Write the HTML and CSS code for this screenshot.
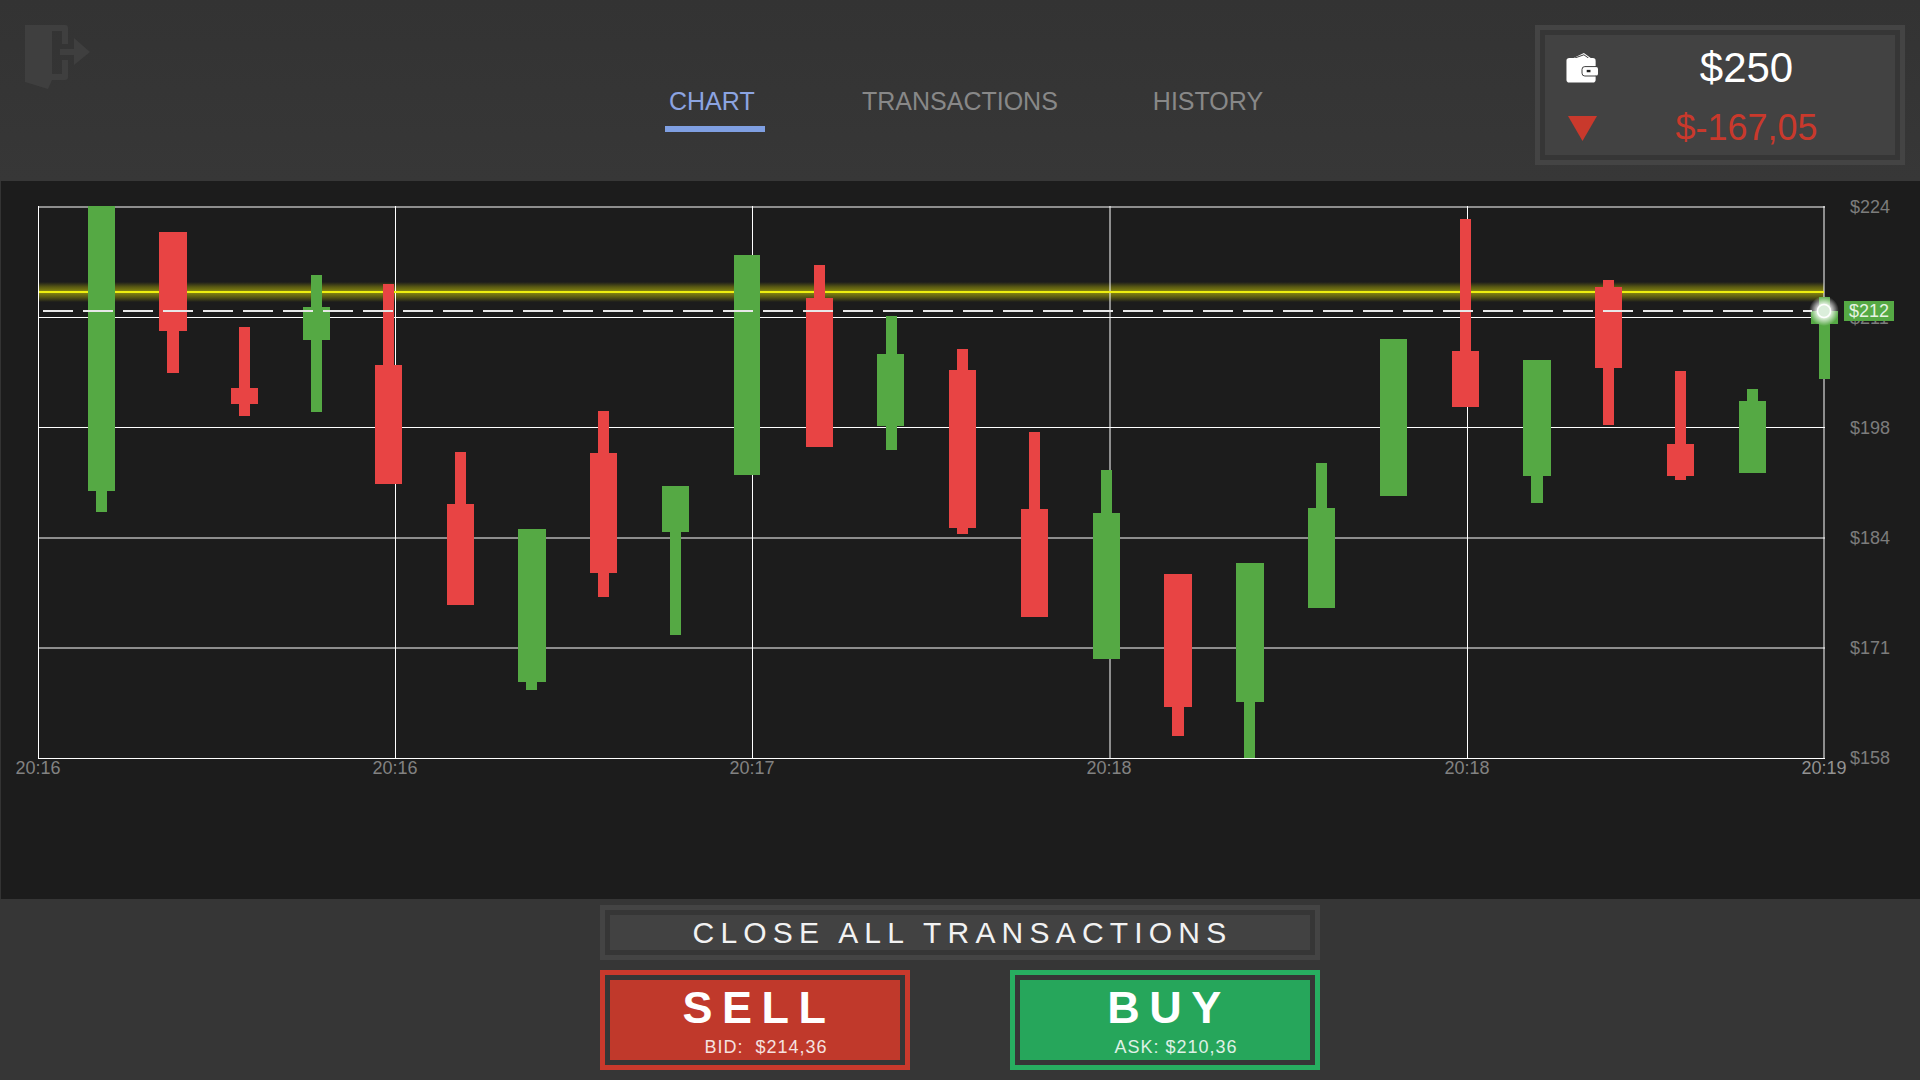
FILE: index.html
```html
<!DOCTYPE html>
<html lang="en">
<head>
    <meta charset="UTF-8">
    <meta name="viewport" content="width=device-width, initial-scale=1.0">
    <title>Trading chart</title>
    <link rel="stylesheet" href="styles.css">
</head>
<body>
    <header class="topbar">
        <svg class="logout" width="65" height="65" viewBox="25 25 65 65">
            <polygon class="logout-fill" points="25,25 52,25 52,80 48,89 25,82"/>
            <polyline class="logout-line" points="50,28 65,28 65,44"/>
            <polyline class="logout-line" points="65,60 65,77 50,77"/>
            <rect class="logout-fill" x="60" y="49" width="16" height="6"/>
            <polygon class="logout-fill" points="74,38 90,52 74,65"/>
        </svg>

        <nav class="tabs">
            <a class="tab active">CHART</a>
            <a class="tab">TRANSACTIONS</a>
            <a class="tab">HISTORY</a>
        </nav>

        <div class="frame wallet">
            <div class="frame-inner wallet-inner">
                <div class="wallet-row">
                    <div class="wallet-icon">
                        <svg width="34" height="32" viewBox="0 0 34 32">
                            <polygon fill="#fff" points="7,6 19,0 27,6"/>
                            <polyline fill="none" stroke="#333" stroke-width="1" points="9,5.500 19,2 24,5.500"/>
                            <rect fill="#fff" x="0.500" y="5.500" width="31" height="26" rx="3"/>
                            <rect fill="#fff" x="28" y="15" width="6" height="9" rx="2"/>
                            <path fill="none" stroke="#333" d="M32 14.500H20a3 3 0 0 0-3 3v4a3 3 0 0 0 3 3H32"/>
                            <rect fill="#222" x="22" y="18" width="4" height="2.500"/>
                        </svg>
                    </div>
                    <span class="balance">$250</span>
                </div>
                <div class="wallet-row wallet-row-loss">
                    <div class="wallet-icon">
                        <svg class="loss-arrow" width="29" height="25" viewBox="0 0 29 25">
                            <polygon fill="#c9392c" points="0,0 29,0 14.500,25"/>
                        </svg>
                    </div>
                    <span class="loss">$-167,05</span>
                </div>
            </div>
        </div>
    </header>

    <main class="chart">
        <svg class="plot" width="1920" height="718" viewBox="0 181 1920 718">
            <defs>
                <linearGradient id="glow" x1="0" y1="0" x2="0" y2="1">
                    <stop offset="0" stop-color="#6e6e10" stop-opacity="0"/>
                    <stop offset="0.25" stop-color="#6e6e10" stop-opacity="0.75"/>
                    <stop offset="0.5" stop-color="#8f8f10"/>
                    <stop offset="0.75" stop-color="#6e6e10" stop-opacity="0.75"/>
                    <stop offset="1" stop-color="#6e6e10" stop-opacity="0"/>
                </linearGradient>
                <radialGradient id="halo">
                    <stop offset="0.45" stop-color="#fff" stop-opacity="0.85"/>
                    <stop offset="1" stop-color="#fff" stop-opacity="0"/>
                </radialGradient>
            </defs>

            <rect x="39" y="282" width="1785" height="20" fill="url(#glow)"/>

            <!-- grid -->
            <g class="grid">
                <line x1="38" x2="1825" y1="207" y2="207"/>
                <line x1="38" x2="1825" y1="317.500" y2="317.500"/>
                <line x1="38" x2="1825" y1="427.500" y2="427.500"/>
                <line x1="38" x2="1825" y1="538" y2="538"/>
                <line x1="38" x2="1825" y1="648" y2="648"/>
                <line x1="38" x2="1825" y1="758.500" y2="758.500"/>
                <line x1="38.500" x2="38.500" y1="206" y2="759"/>
                <line x1="395.500" x2="395.500" y1="206" y2="759"/>
                <line x1="752.500" x2="752.500" y1="206" y2="759"/>
                <line x1="1110" x2="1110" y1="206" y2="759"/>
                <line x1="1467.500" x2="1467.500" y1="206" y2="759"/>
                <line x1="1824" x2="1824" y1="206" y2="759"/>
            </g>

            <rect class="target" x="39" y="291" width="1785" height="2"/>

            <!-- candles -->
            <g class="up">
                <rect x="88" y="206" width="27" height="285"/><rect x="96" y="491" width="11" height="21"/>
                <rect x="303" y="307" width="27" height="33"/><rect x="311" y="275" width="11" height="137"/>
                <rect x="518" y="529" width="28" height="153"/><rect x="526" y="682" width="11" height="8"/>
                <rect x="662" y="486" width="27" height="46"/><rect x="670" y="532" width="11" height="103"/>
                <rect x="734" y="255" width="26" height="220"/>
                <rect x="877" y="354" width="27" height="72"/><rect x="886" y="316" width="11" height="134"/>
                <rect x="1093" y="513" width="27" height="146"/><rect x="1101" y="470" width="11" height="43"/>
                <rect x="1236" y="563" width="28" height="139"/><rect x="1244" y="702" width="11" height="56"/>
                <rect x="1308" y="508" width="27" height="100"/><rect x="1316" y="463" width="11" height="45"/>
                <rect x="1380" y="339" width="27" height="157"/>
                <rect x="1523" y="360" width="28" height="116"/><rect x="1531" y="476" width="12" height="27"/>
                <rect x="1739" y="401" width="27" height="72"/><rect x="1747" y="389" width="11" height="12"/>
                <rect x="1811" y="311" width="27" height="13"/><rect x="1819" y="297" width="11" height="82"/>
            </g>
            <g class="down">
                <rect x="159" y="232" width="28" height="99"/><rect x="167" y="331" width="12" height="42"/>
                <rect x="231" y="388" width="27" height="16"/><rect x="239" y="327" width="11" height="89"/>
                <rect x="375" y="365" width="27" height="119"/><rect x="383" y="284" width="11" height="81"/>
                <rect x="447" y="504" width="27" height="101"/><rect x="455" y="452" width="11" height="52"/>
                <rect x="590" y="453" width="27" height="120"/><rect x="598" y="411" width="11" height="186"/>
                <rect x="806" y="298" width="27" height="149"/><rect x="814" y="265" width="11" height="33"/>
                <rect x="949" y="370" width="27" height="158"/><rect x="957" y="349" width="11" height="185"/>
                <rect x="1021" y="509" width="27" height="108"/><rect x="1029" y="432" width="11" height="77"/>
                <rect x="1164" y="574" width="28" height="133"/><rect x="1172" y="707" width="12" height="29"/>
                <rect x="1452" y="351" width="27" height="56"/><rect x="1460" y="219" width="11" height="132"/>
                <rect x="1595" y="287" width="27" height="81"/><rect x="1603" y="280" width="11" height="145"/>
                <rect x="1667" y="444" width="27" height="32"/><rect x="1675" y="371" width="11" height="109"/>
            </g>

            <line class="price-line" x1="43" x2="1812" y1="311" y2="311"/>

            <circle cx="1824" cy="311" r="15" fill="url(#halo)"/>
            <circle class="marker" cx="1824" cy="311" r="6.500"/>

            <!-- axis labels -->
            <g class="axis">
                <text x="1850" y="213">$224</text>
                <text x="1850" y="324">$211</text>
                <text x="1850" y="434">$198</text>
                <text x="1850" y="544">$184</text>
                <text x="1850" y="654">$171</text>
                <text x="1850" y="764">$158</text>
                <text class="time" x="38" y="774">20:16</text>
                <text class="time" x="395" y="774">20:16</text>
                <text class="time" x="752" y="774">20:17</text>
                <text class="time" x="1109" y="774">20:18</text>
                <text class="time" x="1467" y="774">20:18</text>
                <text class="time last" x="1824" y="774">20:19</text>
            </g>

            <rect class="price-tag" x="1844" y="301" width="50" height="20"/>
            <text class="price-text" x="1869" y="317">$212</text>
        </svg>
    </main>

    <footer class="actions">
        <button class="frame close-all">
            <span class="frame-inner close-label">CLOSE ALL TRANSACTIONS</span>
        </button>
        <div class="trade-row">
            <button class="trade sell">
                <span class="trade-inner">
                    <span class="trade-title">SELL</span>
                    <span class="trade-price">BID:  $214,36</span>
                </span>
            </button>
            <button class="trade buy">
                <span class="trade-inner">
                    <span class="trade-title">BUY</span>
                    <span class="trade-price">ASK: $210,36</span>
                </span>
            </button>
        </div>
    </footer>
</body>
</html>
```

FILE: styles.css
```css
* {
    box-sizing: border-box;
}
body {
    margin: 0;
    width: 1920px;
    height: 1080px;
    overflow: hidden;
    background: #363636;
    font-family: "Liberation Sans", Arial, sans-serif;
    display: flex;
    flex-direction: column;
}

/* top bar */
.topbar {
    height: 181px;
    display: flex;
    align-items: flex-start;
    background: linear-gradient(to bottom, #333, #373737);
}
.logout {
    margin: 25px 0 0 25px;
    flex: none;
}
.logout-fill {
    fill: #3f3f3f;
}
.logout-line {
    fill: none;
    stroke: #3f3f3f;
    stroke-width: 6;
    stroke-linejoin: round;
}
.tabs {
    display: flex;
    gap: 95px;
    margin: 86px 0 0 575px;
}
.tab {
    font-size: 25px;
    line-height: 30px;
    color: #888;
    padding-bottom: 10px;
}
.tab.active {
    width: 100px;
    margin-right: 2px;
    padding-left: 4px;
    color: #8ca4e2;
    border-bottom: 6px solid #7f9fe2;
}

/* double border used by the wallet and the close button */
.frame {
    display: block;
    padding: 5px;
    border: 5px solid #444;
    background: #363636;
}
.frame-inner {
    display: block;
    background: #424242;
}
.wallet {
    width: 370px;
    height: 140px;
    margin: 25px 15px 0 auto;
}
.wallet-inner {
    height: 120px;
    padding-top: 8px;
}
.wallet-row {
    display: flex;
    align-items: center;
    height: 50px;
}
.wallet-row-loss {
    height: 44px;
    margin-top: 13px;
}
.wallet-icon {
    width: 53px;
    flex: none;
    padding-left: 21px;
    display: flex;
}
.loss-arrow {
    margin-left: 2px;
}
.balance {
    flex: 1;
    text-align: center;
    font-size: 42px;
    color: #fff;
}
.loss {
    flex: 1;
    text-align: center;
    font-size: 36px;
    color: #c9392c;
}

/* chart */
.chart {
    height: 718px;
    background: #1c1c1c;
    box-shadow: inset 1px 0 0 #333;
}
.plot {
    display: block;
}
.grid line {
    stroke: #fff;
    stroke-width: 1;
}
.target {
    fill: #eeee10;
}
.up rect {
    fill: #55a944;
}
.down rect {
    fill: #e84444;
}
.price-line {
    stroke: #e8e8e8;
    stroke-width: 2;
    stroke-dasharray: 30 10;
}
.marker {
    fill: #dbeedb;
    stroke: #fff;
    stroke-width: 1.500;
}
.axis text {
    font-size: 18px;
    fill: #7c7c7c;
}
.axis .time {
    text-anchor: middle;
    fill: #828282;
}
.axis .last {
    fill: #929292;
}
.price-tag {
    fill: #55a944;
}
.price-text {
    font-size: 18px;
    fill: #e6f3e2;
    text-anchor: middle;
}

/* bottom buttons */
.actions {
    flex: 1;
    width: 720px;
    margin: 0 auto;
    padding-top: 6px;
    display: flex;
    flex-direction: column;
    gap: 10px;
}
button {
    font-family: inherit;
    margin: 0;
    cursor: pointer;
}
.close-all {
    width: 720px;
    height: 55px;
}
.close-label {
    height: 35px;
    padding: 0 0 0 5px;
    line-height: 35px;
    font-size: 30px;
    letter-spacing: 6.200px;
    text-align: center;
    color: #f2f2f2;
}
.trade-row {
    display: flex;
    justify-content: space-between;
}
.trade {
    width: 310px;
    height: 100px;
    padding: 5px;
    background: #363636;
}
.trade-inner {
    display: flex;
    flex-direction: column;
    align-items: center;
    height: 80px;
    padding-top: 3px;
    color: #fff;
}
.trade-title {
    font-size: 45px;
    font-weight: bold;
    line-height: 50px;
    letter-spacing: 9.500px;
    padding-left: 8px;
}
.trade-price {
    margin: 2px 0 0 22px;
    font-size: 18px;
    line-height: 24px;
    letter-spacing: 1px;
    white-space: pre;
    opacity: 0.85;
}
.sell {
    border: 5px solid #c9392c;
}
.sell .trade-inner {
    background: #c0392b;
}
.buy {
    border: 5px solid #27ae60;
}
.buy .trade-inner {
    background: #26a65b;
}
```
